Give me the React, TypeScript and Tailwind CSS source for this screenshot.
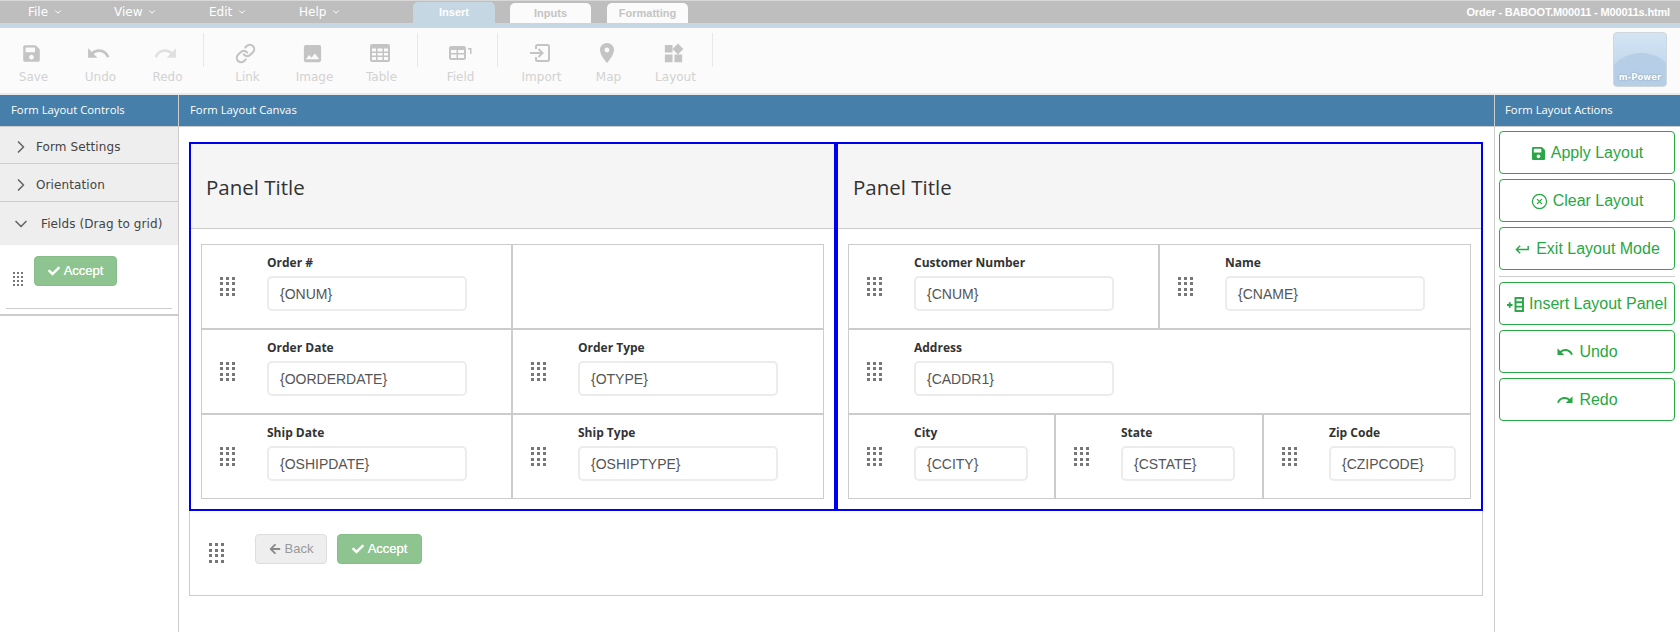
import React from 'react';
import { ChevronDown, ChevronRight, CircleX } from 'lucide-react';
import { FaArrowLeft, FaCheck, FaSave } from 'react-icons/fa';
import { MdImage, MdKeyboardReturn, MdPlace, MdRedo, MdUndo, MdWidgets } from 'react-icons/md';
import { FiLink } from 'react-icons/fi';

const TableIcon = () => (
  <svg width="20" height="20" viewBox="0 0 20 20" fill="currentColor">
    <path d="M2 1h16a2 2 0 0 1 2 2v14a2 2 0 0 1-2 2H2a2 2 0 0 1-2-2V3a2 2 0 0 1 2-2zm0 4.500v3h4v-3zm5.500 0v3h5v-3zm6.500 0v3h4v-3zM2 10v2.500h4V10zm5.500 0v2.500h5V10zm6.500 0v2.500h4V10zM2 14v3h4v-3zm5.500 0v3h5v-3zm6.500 0v3h4v-3z" fillRule="evenodd" />
  </svg>
);

const FieldIcon = () => (
  <svg width="23" height="16" viewBox="0 0 23 16" fill="currentColor">
    <path d="M2 1h13a2 2 0 0 1 2 2v10a2 2 0 0 1-2 2H2a2 2 0 0 1-2-2V3a2 2 0 0 1 2-2zm0 4v3h5.500V5zm7 0v3h6V5zM2 9.500V13h5.500V9.500zm7 0V13h6V9.500z" fillRule="evenodd" />
    <path d="M19 3h3.500v6H21V4.500h-2z" />
  </svg>
);

const ImportIcon = () => (
  <svg width="20" height="18" viewBox="0 0 20 18" fill="none" stroke="currentColor" strokeWidth="2">
    <path d="M6 5V2.500a1.500 1.500 0 0 1 1.500-1.500h10a1.500 1.500 0 0 1 1.500 1.500v13a1.500 1.500 0 0 1-1.500 1.500h-10A1.500 1.500 0 0 1 6 15.500V13" />
    <path d="M0 9h12M8.500 5l4 4-4 4" />
  </svg>
);

const InsertPanelIcon = () => (
  <svg width="17" height="15" viewBox="0 0 17 15" fill="none" stroke="currentColor" strokeWidth="1.900">
    <path d="M0 8h5.500M2.750 5.200v5.600" />
    <rect x="8.500" y="1" width="7.500" height="13" />
    <path d="M8.500 5.300h7.500M8.500 9.600h7.500" />
  </svg>
);

const Grip = ({ small }: { small?: boolean }) => (
  <div className={small ? 'grid grid-cols-3 gap-[2px] w-[10px]' : 'grid grid-cols-3 gap-x-[3px] gap-y-[2.500px] w-[15px]'}>
    {Array.from({ length: 12 }).map((_, i) => (
      <span key={i} className={small ? 'block w-[2px] h-[2px] bg-[#777]' : 'block w-[3px] h-[3px] bg-[#777]'} />
    ))}
  </div>
);

const menus = [
  { name: 'File', cls: 'w-[86px]' },
  { name: 'View', cls: 'w-[95px]' },
  { name: 'Edit', cls: 'w-[90px]' },
  { name: 'Help', cls: 'w-[114px]' },
];

const ToolBtn = ({ icon, label, noShift }: { icon: React.ReactNode; label: string; noShift?: boolean }) => (
  <div className="w-[67px] flex flex-col items-center">
    <div className={`h-[20px] mt-[15px] flex items-center justify-center text-[#c4c4c4] ${noShift ? '' : 'pr-[4px]'}`}>{icon}</div>
    <div className="mt-[5px] text-[12px] leading-[18px] text-[#d2d2d2] font-['DejaVu_Sans',sans-serif]">{label}</div>
  </div>
);

const Sep = ({ cls }: { cls: string }) => <div className={`w-[1px] h-[34px] mt-[5px] bg-[#e8e8e8] ${cls}`} />;

type Cell = { label?: string; value?: string; cls: string; inputCls?: string };

const leftRows: Cell[][] = [
  [{ label: 'Order #', value: '{ONUM}', cls: 'w-[311px]' }, { cls: 'flex-1' }],
  [{ label: 'Order Date', value: '{OORDERDATE}', cls: 'w-[311px]' }, { label: 'Order Type', value: '{OTYPE}', cls: 'flex-1' }],
  [{ label: 'Ship Date', value: '{OSHIPDATE}', cls: 'w-[311px]' }, { label: 'Ship Type', value: '{OSHIPTYPE}', cls: 'flex-1' }],
];

const rightRows: Cell[][] = [
  [{ label: 'Customer Number', value: '{CNUM}', cls: 'w-[311px]' }, { label: 'Name', value: '{CNAME}', cls: 'flex-1' }],
  [{ label: 'Address', value: '{CADDR1}', cls: 'flex-1' }],
  [
    { label: 'City', value: '{CCITY}', cls: 'w-[207px]', inputCls: 'w-[114px]' },
    { label: 'State', value: '{CSTATE}', cls: 'w-[208px]', inputCls: 'w-[114px]' },
    { label: 'Zip Code', value: '{CZIPCODE}', cls: 'flex-1', inputCls: 'w-[127px]' },
  ],
];

const FieldCell = ({ cell }: { cell: Cell }) => (
  <div className={`${cell.cls} h-full border border-[#ccc] flex`}>
    {cell.label && (
      <>
        <div className="w-[65px] shrink-0 pl-[18px] flex items-center">
          <Grip />
        </div>
        <div className="pt-[7px]">
          <div className="h-[24px] leading-[22px] text-[12px] font-bold text-[#333] font-['Open_Sans',sans-serif]">{cell.label}</div>
          <div className={`${cell.inputCls || 'w-[200px]'} h-[35px] border-2 border-[#ececec] rounded-[5px] pl-[11px] pt-[1px] flex items-center text-[14px] text-[#555] font-['Liberation_Sans',sans-serif]`}>
            {cell.value}
          </div>
        </div>
      </>
    )}
  </div>
);

const Panel = ({ rows }: { rows: Cell[][] }) => (
  <div className="flex-1 border-2 border-[#0000f0]">
    <div className="h-[85px] bg-[#f5f5f5] border-b border-[#ccc] pl-[15px] pt-[3px] flex items-center text-[20.500px] text-[#333] font-['Open_Sans',sans-serif]">
      Panel Title
    </div>
    <div className="pt-[15px] px-[10px]">
      {rows.map((row, i) => (
        <div key={i} className="flex h-[85px]">
          {row.map((c, j) => (
            <FieldCell key={j} cell={c} />
          ))}
        </div>
      ))}
    </div>
  </div>
);

const accordion = [
  { name: 'Form Settings', cls: 'h-[37px]' },
  { name: 'Orientation', cls: 'h-[38px]' },
];

const AcceptBtn = ({ cls }: { cls: string }) => (
  <div className={`${cls} h-[30px] bg-[#8dc48f] border border-[#86bd88] rounded-[4px] flex items-center justify-center gap-[4px] text-white text-[13px] [text-shadow:0_0_0.6px_#fff] font-['Liberation_Sans',sans-serif]`}>
    <FaCheck size={12} />
    Accept
  </div>
);

const actions: { label: string; icon: React.ReactNode; hr?: boolean }[] = [
  { label: 'Apply Layout', icon: <FaSave size={15} /> },
  { label: 'Clear Layout', icon: <CircleX size={17} strokeWidth={1.8} /> },
  { label: 'Exit Layout Mode', icon: <MdKeyboardReturn size={17} />, hr: true },
  { label: 'Insert Layout Panel', icon: <InsertPanelIcon /> },
  { label: 'Undo', icon: <MdUndo size={18} /> },
  { label: 'Redo', icon: <MdRedo size={18} /> },
];

const headerCls = "h-[32px] bg-[#4680aa] border-b border-[#ccc] flex items-center text-[11.3px] text-white font-['Open_Sans',sans-serif]";

export default function App() {
  return (
    <div className="w-[1680px] h-[632px] overflow-hidden bg-white flex flex-col">
      {/* top menu bar */}
      <div className="h-[23px] bg-[#bebebe] border-t border-[#d8d8d8] flex pl-[28px] text-white">
        {menus.map((m) => (
          <div key={m.name} className={`${m.cls} flex items-center gap-[5px] text-[12px] font-['DejaVu_Sans',sans-serif]`}>
            {m.name}
            <ChevronDown size={10} strokeWidth={2.4} />
          </div>
        ))}
        <div className="mt-[1px] w-[82px] h-[21px] bg-[#c5d7e3] rounded-t-[5px] flex items-center justify-center text-[11px] font-bold font-['Liberation_Sans',sans-serif]">
          Insert
        </div>
        <div className="ml-[15px] mt-[2px] w-[81px] h-[20px] bg-[#fbfbfb] rounded-t-[5px] flex items-center justify-center text-[11px] font-bold text-[#c4c4c4] font-['Liberation_Sans',sans-serif]">
          Inputs
        </div>
        <div className="ml-[16px] mt-[2px] w-[81px] h-[20px] bg-[#fbfbfb] rounded-t-[5px] flex items-center justify-center text-[11px] font-bold text-[#c4c4c4] font-['Liberation_Sans',sans-serif]">
          Formatting
        </div>
        <div className="ml-auto pr-[10px] flex items-center text-[11px] font-bold tracking-[-0.17px] font-['Liberation_Sans',sans-serif]">
          Order - BABOOT.M00011 - M00011s.html
        </div>
      </div>
      <div className="h-[5px] bg-[#c5d7e3]" />

      {/* toolbar */}
      <div className="h-[67px] bg-[#fbfbfb] border-b-2 border-[#eaeaea] flex">
        <ToolBtn icon={<FaSave size={19} />} label="Save" />
        <ToolBtn icon={<MdUndo size={25} />} label="Undo" />
        <ToolBtn icon={<MdRedo size={25} className="text-[#e0e0e0]" />} label="Redo" />
        <Sep cls="ml-[2px] mr-[10px]" />
        <ToolBtn icon={<FiLink size={21} strokeWidth={2.4} />} label="Link" />
        <ToolBtn icon={<MdImage size={23} />} label="Image" />
        <ToolBtn icon={<TableIcon />} label="Table" />
        <Sep cls="ml-[2px] mr-[9px]" />
        <ToolBtn icon={<FieldIcon />} label="Field" noShift />
        <Sep cls="ml-[3px] mr-[10px]" />
        <ToolBtn icon={<ImportIcon />} label="Import" />
        <ToolBtn icon={<MdPlace size={24} />} label="Map" />
        <ToolBtn icon={<MdWidgets size={23} />} label="Layout" />
        <Sep cls="ml-[3px]" />
        <div className="relative ml-auto mr-[13px] mt-[4px] w-[54px] h-[55px] rounded-[4px] border border-[#cfd6dc] bg-gradient-to-b from-[#d3e5f4] to-[#b9d0e8] overflow-hidden flex items-end justify-center pb-[3px]">
          <svg className="absolute inset-0" width="54" height="55" viewBox="0 0 54 55">
            <path d="M0 32C14 16 40 16 54 32V55H0z" fill="#b6cee6" />
          </svg>
          <span className="relative text-[8.5px] leading-[12px] font-bold text-white [text-shadow:0_0_2px_#7f93a8] font-['DejaVu_Sans',sans-serif]">m-Power</span>
        </div>
      </div>

      {/* body */}
      <div className="flex-1 flex">
        <div className="w-[179px] border-r border-[#ccc] shrink-0">
          <div className={`${headerCls} pl-[11px]`}>Form Layout Controls</div>
          {accordion.map((a) => (
            <div key={a.name} className={`${a.cls} pt-[4px] bg-[#eeeeee] border-b border-[#ccc] flex items-center text-[12px] tracking-[0.1px] text-[#444] font-['DejaVu_Sans',sans-serif]`}>
              <ChevronRight size={20} strokeWidth={2} className="ml-[11px] mr-[5px] text-[#666]" />
              {a.name}
            </div>
          ))}
          <div className="h-[43px] bg-[#eeeeee] flex items-center text-[12px] tracking-[0.1px] text-[#444] font-['DejaVu_Sans',sans-serif]">
            <ChevronDown size={20} strokeWidth={2} className="ml-[11px] mr-[10px] text-[#666]" />
            Fields (Drag to grid)
          </div>
          <div className="h-[71px] border-b-2 border-[#ccc] px-[6px]">
            <div className="h-[64px] border-b border-[#ccc] flex pl-[7px]">
              <div className="w-[21px] pt-[27px]">
                <Grip small />
              </div>
              <AcceptBtn cls="mt-[11px] w-[83px]" />
            </div>
          </div>
        </div>

        <div className="flex-1">
          <div className={`${headerCls} pl-[11px]`}>Form Layout Canvas</div>
          <div className="pl-[10px] pr-[11px] pt-[15px]">
            <div className="flex h-[369px]">
              <Panel rows={leftRows} />
              <Panel rows={rightRows} />
            </div>
            <div className="h-[85px] border border-t-0 border-[#ccc] flex pl-[19px]">
              <div className="w-[46px] flex items-center">
                <Grip />
              </div>
              <div className="mt-[23px] w-[72px] h-[30px] bg-[#eeeeee] border border-[#ddd] rounded-[4px] flex items-center justify-center gap-[4px] text-[13px] text-[#999] font-['Liberation_Sans',sans-serif]">
                <FaArrowLeft size={12} className="text-[#888]" />
                Back
              </div>
              <AcceptBtn cls="mt-[23px] ml-[10px] w-[85px]" />
            </div>
          </div>
        </div>

        <div className="w-[186px] border-l border-[#ccc] shrink-0">
          <div className={`${headerCls} pl-[10px]`}>Form Layout Actions</div>
          <div className="pl-[4px] pr-[5px] pt-[4px] flex flex-col gap-[5px]">
            {actions.map((a) => (
              <React.Fragment key={a.label}>
                <div className="h-[43px] pt-[1px] border border-[#28a745] rounded-[4px] flex items-center justify-center gap-[5px] text-[16px] text-[#28a745] font-['Liberation_Sans',sans-serif]">
                  {a.icon}
                  {a.label}
                </div>
                {a.hr && <div className="h-[1px] mt-[1px] bg-[#ccc]" />}
              </React.Fragment>
            ))}
          </div>
        </div>
      </div>
    </div>
  );
}
